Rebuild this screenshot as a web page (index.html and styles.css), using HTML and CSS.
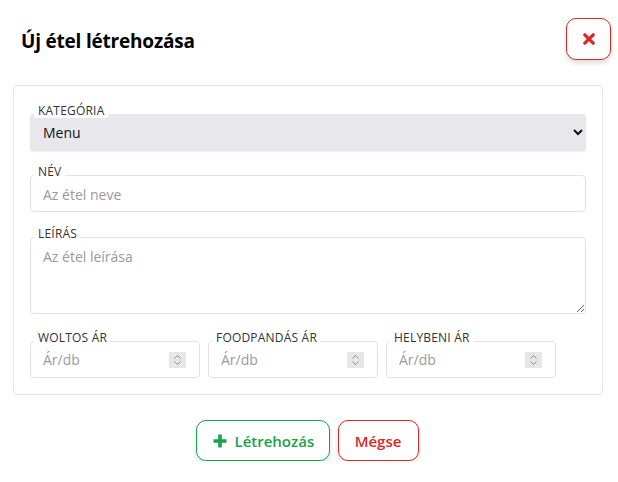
FILE: index.html
```html
<!DOCTYPE html>
<html lang="hu">
<head>
<meta charset="utf-8">
<title>Új étel létrehozása</title>
<link rel="stylesheet" href="styles.css">
</head>
<body>
<div class="modal">
  <div class="header">
    <h1 class="title">Új étel létrehozása</h1>
    <button class="close-btn" type="button" aria-label="Bezárás">
      <svg width="12" height="12" viewBox="0 0 12 12"><path d="M1.8 1.8 L10.2 10.2 M10.2 1.8 L1.8 10.2" stroke="#dc2626" stroke-width="3.2" stroke-linecap="round"/></svg>
    </button>
  </div>
  <div class="card">
    <div class="field">
      <label class="label">Kategória</label>
      <select class="select"><option>Menu</option></select>
    </div>
    <div class="field">
      <label class="label">Név</label>
      <input class="input" type="text" placeholder="Az étel neve">
    </div>
    <div class="field field-text">
      <label class="label">Leírás</label>
      <textarea class="textarea" placeholder="Az étel leírása"></textarea>
    </div>
    <div class="prices">
      <div class="field">
        <label class="label">Woltos ár</label>
        <div class="num">
          <input class="num-input" type="text" placeholder="Ár/db">
          <span class="spin"><svg width="9" height="12" viewBox="0 0 9 12"><path d="M1.5 4.5 L4.5 1.5 L7.5 4.5 M1.5 7.5 L4.5 10.5 L7.5 7.5" fill="none" stroke="#8a8a8a" stroke-width="1"/></svg></span>
        </div>
      </div>
      <div class="field">
        <label class="label">Foodpandás ár</label>
        <div class="num">
          <input class="num-input" type="text" placeholder="Ár/db">
          <span class="spin"><svg width="9" height="12" viewBox="0 0 9 12"><path d="M1.5 4.5 L4.5 1.5 L7.5 4.5 M1.5 7.5 L4.5 10.5 L7.5 7.5" fill="none" stroke="#8a8a8a" stroke-width="1"/></svg></span>
        </div>
      </div>
      <div class="field">
        <label class="label">Helybeni ár</label>
        <div class="num">
          <input class="num-input" type="text" placeholder="Ár/db">
          <span class="spin"><svg width="9" height="12" viewBox="0 0 9 12"><path d="M1.5 4.5 L4.5 1.5 L7.5 4.5 M1.5 7.5 L4.5 10.5 L7.5 7.5" fill="none" stroke="#8a8a8a" stroke-width="1"/></svg></span>
        </div>
      </div>
    </div>
  </div>
  <div class="actions">
    <button class="btn btn-create" type="button">
      <svg class="plus" width="14" height="14" viewBox="0 0 14 14"><path d="M7 0.5 V13.5 M0.5 7 H13.5" stroke="#16a34a" stroke-width="3.6"/></svg>
      <span>Létrehozás</span>
    </button>
    <button class="btn btn-cancel" type="button">Mégse</button>
  </div>
</div>
</body>
</html>
```
FILE: styles.css
```css
* { box-sizing: border-box; }
html, body { margin: 0; padding: 0; background: #fff; }
body {
  font-family: "Open Sans", "Noto Sans", sans-serif;
  color: #111;
}
.modal {
  width: 618px;
  padding: 18px 7px 0 13px;
}
.header {
  display: flex;
  justify-content: space-between;
  align-items: center;
  padding-left: 8px;
  height: 42px;
  margin-bottom: 25px;
}
.title {
  margin: 4px 0 0 0;
  font-size: 19px;
  font-weight: 700;
  color: #000;
  letter-spacing: -0.2px;
}
.close-btn {
  width: 45px;
  height: 42px;
  border: 1px solid #dc2626;
  border-radius: 10px;
  background: #fff;
  display: flex;
  align-items: center;
  justify-content: center;
  box-shadow: 0 3px 5px rgba(0,0,0,0.14);
  padding: 0;
}
.card {
  width: 590px;
  border: 1px solid #e6e6e6;
  border-radius: 4px;
  padding: 18px 16px 16px 16px;
  display: flex;
  flex-direction: column;
  gap: 14px;
}
.field {
  display: flex;
  flex-direction: column;
}
.field-text { margin-top: 1px; }
.label {
  align-self: flex-start;
  position: relative;
  z-index: 1;
  margin: 0 0 -4px 4px;
  padding: 0 4px;
  background: #fff;
  font-size: 12px;
  line-height: 14px;
  color: #333;
  text-transform: uppercase;
  letter-spacing: 0.2px;
}
.select {
  height: 37px;
  border: none;
  border-radius: 4px;
  background-color: #e8e8ec;
  font-family: inherit;
  font-size: 14px;
  color: #111;
  padding: 0 10px 0 9px;
  box-shadow: 0 1px 2px rgba(0,0,0,0.08);
}
.input, .textarea, .num {
  border: 1px solid #e2e2e2;
  border-radius: 4px;
  background: #fff;
  font-family: inherit;
  font-size: 14px;
  color: #111;
}
.input {
  height: 37px;
  padding: 1px 12px 0;
}
.textarea {
  height: 77px;
  padding: 9px 12px;
  resize: vertical;
  display: block;
}
.input::placeholder, .textarea::placeholder, .num-input::placeholder {
  color: #9a9a9a;
}
.prices {
  display: grid;
  grid-template-columns: repeat(3, 170px);
  gap: 8px;
  margin-top: 3px;
}
.num {
  height: 37px;
  display: flex;
  align-items: center;
  padding: 0 13px 0 12px;
}
.num-input {
  flex: 1;
  min-width: 0;
  border: none;
  outline: none;
  padding: 0;
  font-family: inherit;
  font-size: 14px;
  background: transparent;
}
.spin {
  width: 17px;
  height: 16px;
  background: #e6e6e6;
  display: flex;
  align-items: center;
  justify-content: center;
  flex-shrink: 0;
}
.actions {
  display: flex;
  justify-content: center;
  gap: 8px;
  margin-top: 25px;
  padding-right: 10px;
}
.btn {
  height: 41px;
  border-radius: 10px;
  background: #fff;
  font-family: inherit;
  font-size: 15px;
  font-weight: 600;
  display: flex;
  align-items: center;
  gap: 8px;
  box-shadow: 0 3px 5px rgba(0,0,0,0.14);
}
.plus { flex-shrink: 0; }
.btn-create {
  width: 134px;
  border: 1px solid #16a34a;
  color: #16a34a;
  padding: 0 0 0 16px;
}
.btn-cancel {
  width: 81px;
  border: 1px solid #dc2626;
  color: #dc2626;
  justify-content: center;
}
```
